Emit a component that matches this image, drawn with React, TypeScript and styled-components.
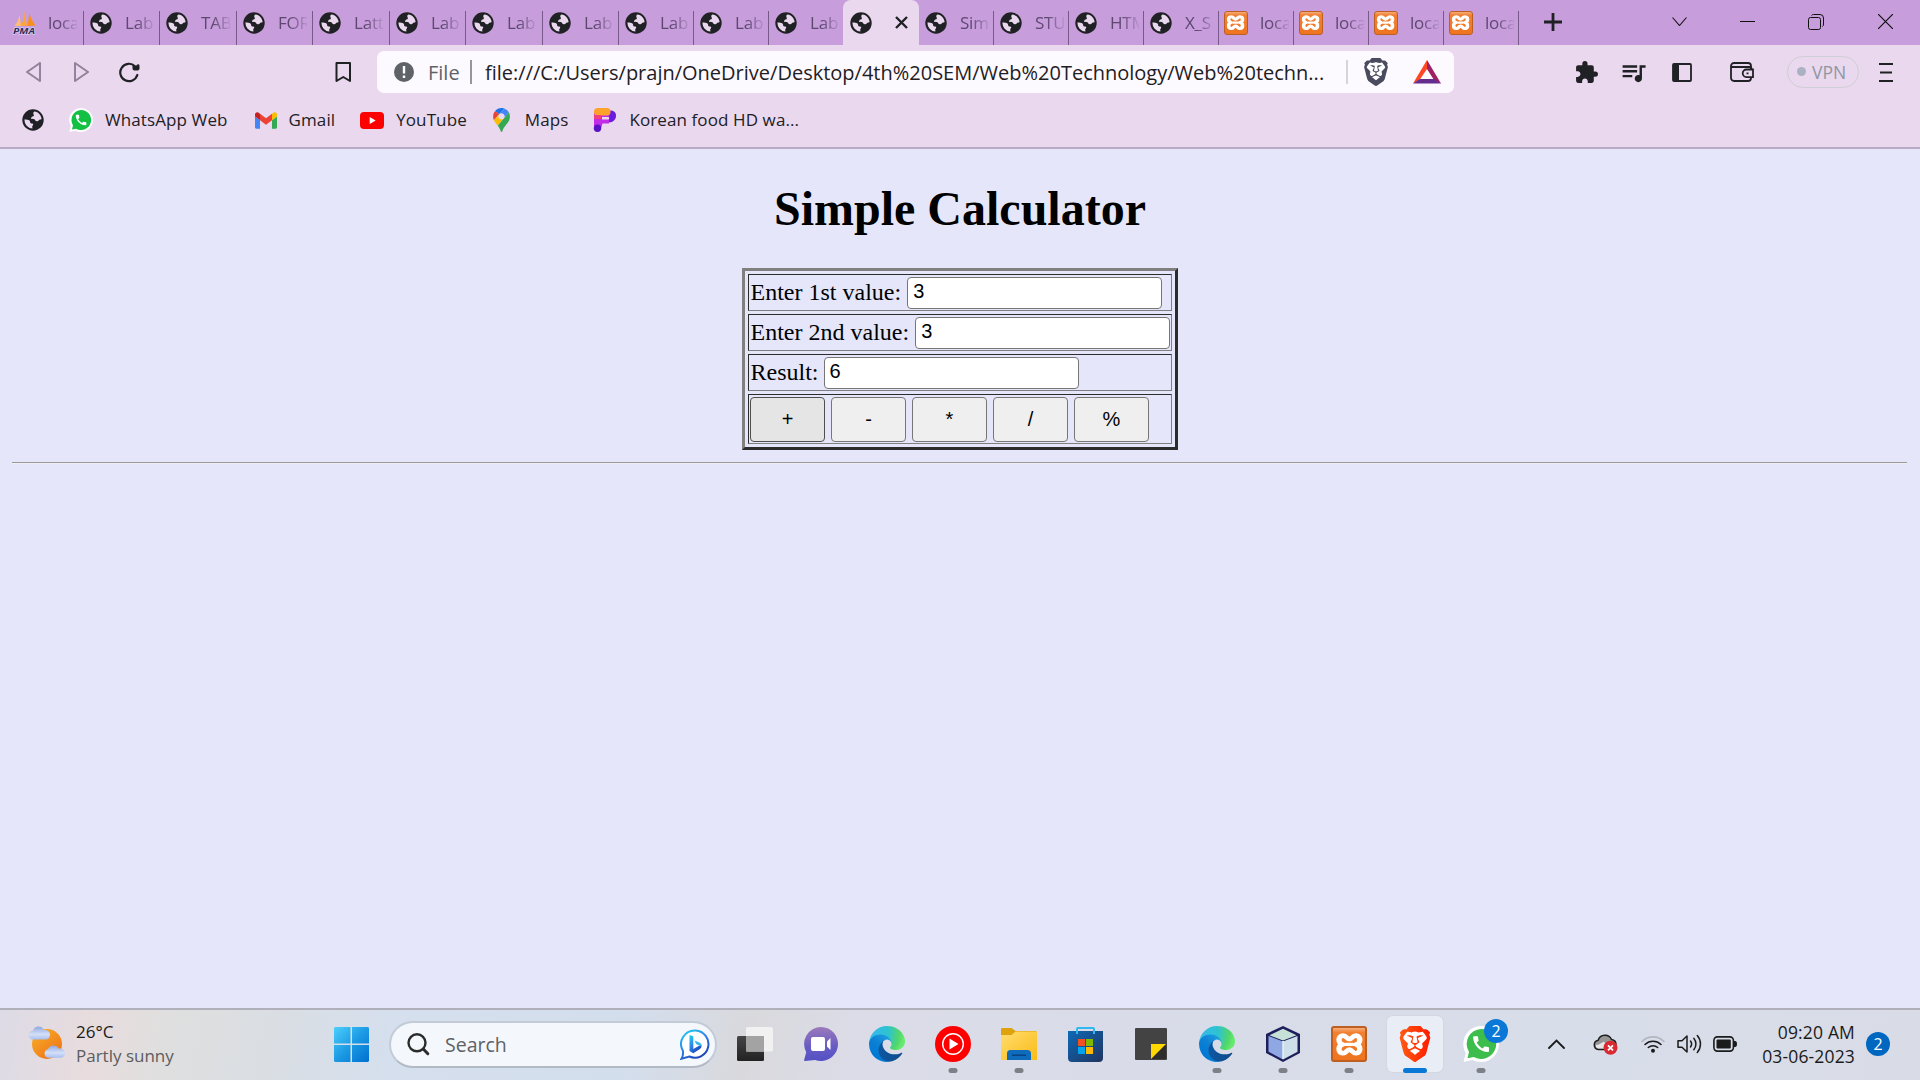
import React from "react";
import styled, { createGlobalStyle, css } from "styled-components";
import { SiBrave } from "react-icons/si";
import { MdExtension, MdQueueMusic } from "react-icons/md";

const UI_FONT = `"Open Sans", "Noto Sans", sans-serif`;

const GlobalStyle = createGlobalStyle`
  *, *::before, *::after { box-sizing: border-box; }
  html, body { margin: 0; padding: 0; }
  body { width: 1920px; height: 1080px; overflow: hidden; background: #e6e6fa; }
  svg { display: block; flex: none; }
`;

const Screen = styled.div`
  display: flex;
  flex-direction: column;
  width: 1920px;
  height: 1080px;
  font-family: ${UI_FONT};
  color: #202124;
`;

/* ---------- Browser chrome ---------- */

const TabStrip = styled.div`
  display: flex;
  height: 45px;
  background: #c79ddc;
`;

const Tab = styled.div<{ $width: number; $pad?: number; $active?: boolean; $divider?: boolean }>`
  display: flex;
  flex: none;
  align-items: flex-start;
  width: ${(p) => p.$width}px;
  padding-left: ${(p) => p.$pad ?? 5}px;
  padding-top: 11px;
  height: 45px;
  ${(p) =>
    p.$divider &&
    css`
      background: linear-gradient(#77598a, #77598a) right bottom / 1.5px 34px no-repeat;
    `}
  ${(p) =>
    p.$active &&
    css`
      background: #ead8ef;
      border-radius: 8px 8px 0 0;
    `}
`;

const TabTitle = styled.span`
  width: 29px;
  margin-left: 12px;
  overflow: hidden;
  white-space: nowrap;
  font-size: 17px;
  font-weight: 400;
  line-height: 23px;
  letter-spacing: -0.2px;
  color: #5d4870;
  mask-image: linear-gradient(90deg, #000 40%, transparent 108%);
`;

const CloseGlyph = styled.svg`
  margin: 5px 0 0 22px;
`;

const WindowControls = styled.div`
  display: flex;
  align-items: center;
  height: 43px;
`;

const Control = styled.div<{ $ml: number }>`
  display: flex;
  margin-left: ${(p) => p.$ml}px;
`;

const Toolbar = styled.div`
  display: flex;
  align-items: center;
  height: 54px;
  background: #ead8ef;
`;

const AddressBar = styled.div`
  display: flex;
  align-items: center;
  width: 1077px;
  height: 42px;
  margin-left: 25px;
  padding-left: 17px;
  background: #fdfaff;
  border-radius: 7px;
`;

const AddressText = styled.span<{ $width: number; $ml: number; $muted?: boolean }>`
  width: ${(p) => p.$width}px;
  margin-left: ${(p) => p.$ml}px;
  padding-top: 1px;
  font-size: 20px;
  line-height: 28px;
  white-space: nowrap;
  color: ${(p) => (p.$muted ? "#5f6368" : "#1f2023")};
`;

const Rule = styled.i<{ $ml: number; $light?: boolean }>`
  width: 2px;
  height: 24px;
  margin-left: ${(p) => p.$ml}px;
  background: ${(p) => (p.$light ? "#d3d5d9" : "#96959b")};
`;

const VpnPill = styled.div`
  display: flex;
  align-items: center;
  width: 72px;
  height: 32px;
  margin-left: 33px;
  padding: 0 0 1px 9px;
  border: 1px solid #cfcfd6;
  border-radius: 16px;
  font-size: 17.5px;
  color: #8f97a3;
`;

const VpnDot = styled.i`
  width: 9px;
  height: 9px;
  margin-right: 6px;
  border-radius: 50%;
  background: #acb0c3;
`;

const Bookmarks = styled.div`
  display: flex;
  align-items: center;
  height: 50px;
  padding: 0 0 6px 21px;
  background: #ead8ef;
  border-bottom: 2px solid #b9a9c4;
`;

const Bookmark = styled.div<{ $ml: number; $gap?: number; $ls?: number }>`
  display: flex;
  align-items: center;
  gap: ${(p) => p.$gap ?? 12}px;
  margin-left: ${(p) => p.$ml}px;
  height: 24px;
  font-size: 17px;
  line-height: 24px;
  letter-spacing: ${(p) => p.$ls ?? 0.1}px;
  white-space: nowrap;
`;

/* ---------- Page ---------- */

const Page = styled.main`
  flex: 1;
  padding: 0 13px 0 12px;
  background: #e6e6fa;
  color: #000;
  font-family: "Liberation Serif", "Times New Roman", serif;
  font-size: 24px;
`;

const Title = styled.h1`
  margin: 0 -1px 0 0;
  padding-top: 33px;
  font-size: 48px;
  line-height: 54px;
  text-align: center;
`;

const Calculator = styled.div`
  display: flex;
  flex-direction: column;
  gap: 3px;
  width: 436px;
  height: 182px;
  margin: 32px 0 0 730px;
  padding: 3px;
  border: 3px solid;
  border-color: #808080 #2c2c2c #2c2c2c #808080;
`;

const Cell = styled.div<{ $height: number; $gap?: number }>`
  display: flex;
  align-items: center;
  gap: ${(p) => p.$gap ?? 6}px;
  height: ${(p) => p.$height}px;
  padding-left: 1px;
  border: 1px solid;
  border-color: #2c2c2c #808080 #808080 #2c2c2c;
  white-space: nowrap;
`;

const FieldLabel = styled.label`
  padding-left: 0.5px;
  line-height: 27px;
`;

const Field = styled.input`
  width: 255px;
  height: 32px;
  padding: 0 5px 2px;
  border: 1px solid #767676;
  border-radius: 4px;
  outline: none;
  background: #fff;
  color: #000;
  font: 20px "Liberation Sans", Arial, sans-serif;
`;

const Operator = styled.button<{ $hover?: boolean }>`
  width: 75px;
  height: 45px;
  padding: 0;
  border: 1px solid ${(p) => (p.$hover ? "#4f4f4f" : "#767676")};
  border-radius: 4px;
  background: ${(p) => (p.$hover ? "#e5e5e5" : "#efefef")};
  color: #000;
  font: 20px "Liberation Sans", Arial, sans-serif;
`;

const PageRule = styled.hr`
  height: 2px;
  margin: 12px 0 0;
  border: 0;
  border-top: 1px solid #9a9a9a;
  border-bottom: 1px solid #eeeef4;
`;

/* ---------- Taskbar ---------- */

const Taskbar = styled.footer`
  display: flex;
  align-items: center;
  height: 72px;
  padding: 0 0 2px 28px;
  border-top: 2px solid #afb0ba;
  background: linear-gradient(
    100deg,
    #dddbe6 0,
    #e8dcdd 95px,
    #dfdfdf 170px,
    #dadee3 270px,
    #d5dfed 390px,
    #d3deed 620px,
    #d9d9dd 740px,
    #dbdce8 860px,
    #d8dce8 1200px,
    #d7dde9 1560px,
    #d9dce7 1920px
  );
`;

const Weather = styled.div`
  width: 130px;
  margin-left: 10px;
  font-size: 17px;
  line-height: 24px;
  white-space: nowrap;
  color: #1b1b1b;
`;

const Muted = styled.div`
  color: #5c5c5e;
`;

const StartButton = styled.div`
  margin-left: 128px;
`;

const SearchBox = styled.div`
  display: flex;
  align-items: center;
  width: 328px;
  height: 47px;
  margin-left: 20px;
  padding-left: 16px;
  border: 2px solid #c3cbd7;
  border-bottom-color: #b1bac5;
  border-radius: 24px;
  background: #f4f7fb;
  color: #5f6165;
  font-size: 19.5px;
`;

const SearchLabel = styled.span`
  width: 235px;
  margin-left: 15px;
`;

const Apps = styled.div`
  display: flex;
  margin-left: 5px;
`;

const AppSlot = styled.div<{ $active?: boolean }>`
  position: relative;
  display: flex;
  align-items: center;
  justify-content: center;
  width: ${(p) => (p.$active ? 56 : 66)}px;
  height: 56px;
  ${(p) =>
    p.$active &&
    css`
      margin: 0 5px;
      border-radius: 6px;
      background: #e9edf5;
      box-shadow: 0 0 0 1px #d3d7e2;
    `}
`;

const Indicator = styled.i<{ $active?: boolean }>`
  position: absolute;
  bottom: -1px;
  left: 50%;
  width: ${(p) => (p.$active ? 24 : 9)}px;
  height: 5px;
  border-radius: 3px;
  transform: translateX(-50%);
  background: ${(p) => (p.$active ? "#0a78d6" : "#7d8087")};
`;

const Count = styled.span<{ $floating?: boolean }>`
  display: flex;
  align-items: center;
  justify-content: center;
  width: 24px;
  height: 24px;
  border-radius: 50%;
  background: #0067c0;
  color: #fff;
  font-size: 16px;
  line-height: 24px;
  ${(p) =>
    p.$floating &&
    css`
      position: absolute;
      top: 3px;
      left: 36px;
      background: #0a78d6;
    `}
`;

const Tray = styled.div`
  display: flex;
  align-items: center;
  margin-left: 34px;
`;

const TrayItem = styled.div<{ $ml: number }>`
  margin-left: ${(p) => p.$ml}px;
`;

const Clock = styled.div`
  width: 95px;
  margin: 0 11px 0 23px;
  font-size: 17.5px;
  letter-spacing: 0.15px;
  line-height: 24px;
  text-align: right;
  white-space: nowrap;
  color: #1b1b1b;
`;

const XamppTile = styled.div<{ $size: number }>`
  display: flex;
  flex: none;
  align-items: center;
  justify-content: center;
  width: ${(p) => p.$size}px;
  height: ${(p) => p.$size}px;
  border: ${(p) => (p.$size > 30 ? 2 : 1)}px solid #bd5f20;
  border-radius: 3px;
  background: linear-gradient(#f6ae7c 0, #f28032 14%, #ee7420 100%);
`;

/* ---------- Icons ---------- */

const Globe = () => (
  <svg width="24" height="24" viewBox="0 0 24 24">
    <circle cx="12" cy="12" r="10.7" fill="#202124" />
    <path
      fill="#ead8ef"
      d="M3.4 11.6c1.9 0 4.1.1 5.1.9 1 .8.3 2.2 1.2 2.7.9.4 2.3 0 2.5 1 .2 1-1 1.4-1 2.4 0 .8.3 1.2.2 1.9A8.7 8.7 0 0 1 3.4 11.6zM13.6 3.5c3.6.6 6.6 3.5 7 7.6-1 .7-2.2.5-2.7 1.2-.7.9-1.6 1.1-2.8.7-1.4-.5-1-1.8-2.3-2-1.1-.2-2.5.2-2.600-1 0-1.500 2.500-1.200 2.700-2.400.1-.9-.8-1.400-.6-2.500.1-.7.6-1.400 1.300-1.600z"
    />
  </svg>
);

const PmaIcon = () => (
  <svg width="24" height="24" viewBox="0 0 24 24">
    <path fill="#ffbd70" d="M7.500 3.500 9 15H2.500C5 12 7 8 7.500 3.500z" />
    <path fill="#ffa33d" d="M12.500 0 15 15H8.500C11 11 12.500 6 12.500 0z" />
    <path fill="#f98f1d" d="M17.500 2c1 5 3.500 9 6 12.500L15.500 15z" />
    <text x="12" y="23" textAnchor="middle" textLength="22" lengthAdjust="spacingAndGlyphs" fontSize="9" fontWeight="700" fontStyle="italic" fontFamily={UI_FONT} fill="#2d2d5e" stroke="#e6d9f2" strokeWidth="1.200" paintOrder="stroke">PMA</text>
  </svg>
);

const Xampp = ({ size = 24 }: { size?: number }) => (
  <XamppTile $size={size}>
    <svg width={size * 0.8} height={size * 0.8} viewBox="0 0 24 24" fill="none" stroke="#fff" strokeWidth="4.400" strokeLinecap="round" strokeLinejoin="round">
      <path d="M6.400 12C2.500 11 2 4 6.500 3.600 9.500 3.300 9.500 7 12 7s2.500-3.700 5.500-3.400C22 4 21.500 11 17.600 12c3.900 1 4.400 8-.1 8.400-3 .3-3-3.400-5.500-3.400s-2.500 3.700-5.500 3.400C2 20 2.500 13 6.400 12z" transform="translate(0 1.500) scale(1 .875)" />
      <path strokeWidth="2.800" d="M9 12h6" />
    </svg>
  </XamppTile>
);

const PHONE =
  "M20.010 15.380c-1.230 0-2.420-.2-3.530-.56-.35-.12-.74-.03-1.010.24l-1.570 1.970c-2.830-1.350-5.480-3.900-6.890-6.830l1.950-1.660c.27-.28.35-.67.24-1.020-.37-1.110-.56-2.300-.56-3.530 0-.54-.45-.99-.99-.99H4.190C3.650 3 3 3.240 3 3.990 3 13.280 10.730 21 20.010 21c.71 0 .99-.63.99-1.180v-3.450c0-.54-.45-.99-.99-.99z";

const WhatsApp = ({ size, green }: { size: number; green: string }) => (
  <svg width={size} height={size} viewBox="0 0 36 36">
    <path fill="#fff" d="M18 0a18 18 0 1 1-8.300 34L.5 36l2.200-9A18 18 0 0 1 18 0z" />
    <path fill={green} d="M18 3a15 15 0 1 1-7.300 28L4.500 32.200 6 26A15 15 0 0 1 18 3z" />
    <g fill="#fff" transform="translate(7.500 7.500) scale(.88)">
      <path d={PHONE} />
    </g>
  </svg>
);

const Gmail = () => (
  <svg width="22" height="17" viewBox="52 42 88 66">
    <path fill="#4285f4" d="M58 108h14V74L52 59v43c0 3.320 2.690 6 6 6" />
    <path fill="#34a853" d="M120 108h14c3.320 0 6-2.690 6-6V59l-20 15" />
    <path fill="#fbbc04" d="M120 48v26l20-15v-8c0-7.420-8.470-11.650-14.400-7.200" />
    <path fill="#ea4335" d="M72 74V48l24 18 24-18v26L96 92" />
    <path fill="#c5221f" d="M52 51v8l20 15V48l-5.600-4.200c-5.940-4.450-14.400-.22-14.400 7.200" />
  </svg>
);

const YouTube = () => (
  <svg width="24" height="17" viewBox="0 0 24 17">
    <rect width="24" height="17" rx="4" fill="#f00" />
    <path fill="#fff" d="M9.700 5v7l6-3.500z" />
  </svg>
);

const MapsPin = () => (
  <svg width="17" height="24" viewBox="0 0 92.300 132.300">
    <path fill="#1a73e8" d="M60.200 2.200C55.800.8 51 0 46.100 0 32 0 19.300 6.400 10.800 16.500l21.800 18.300L60.200 2.200z" />
    <path fill="#ea4335" d="M10.800 16.500C4.100 24.500 0 34.900 0 46.100c0 8.700 1.700 15.700 4.600 22l28-33.300-21.800-18.300z" />
    <path fill="#4285f4" d="M46.200 28.500c9.800 0 17.700 7.900 17.700 17.700 0 4.300-1.600 8.300-4.200 11.400 0 0 13.900-16.600 27.500-32.700-5.600-10.800-15.300-19-27-22.700L32.600 34.800c3.300-3.800 8.100-6.300 13.600-6.300" />
    <path fill="#fbbc04" d="M46.200 63.800c-9.800 0-17.700-7.900-17.700-17.700 0-4.300 1.500-8.300 4.100-11.300l-28 33.300c4.800 10.600 12.800 19.200 21 29.900l34.100-40.500c-3.300 3.900-8.100 6.300-13.500 6.300" />
    <path fill="#34a853" d="M59.100 109.200c15.400-24.100 33.300-35 33.300-63 0-7.700-1.900-14.900-5.200-21.300L25.600 98c2.600 3.400 5.300 7.300 7.900 11.300 9.400 14.500 6.800 23.100 12.800 23.100s3.400-8.700 12.800-23.200" />
  </svg>
);

const PicsArt = () => (
  <svg width="24" height="24" viewBox="0 0 24 24">
    <path fill="#6a1be0" d="M16 2.500c5.500 0 7 2 7 5.500s-3 6.500-7 6.500z" />
    <path fill="#c22be8" d="M1 5h15v10.500H9.500L8 20.500H1z" />
    <rect x="1" width="16.500" height="7.500" rx="3.500" fill="#ffa22b" />
    <path fill="#f43f7e" d="M1 7h7v4H1z" />
    <path fill="#ead8ef" d="M9 9h6a1.300 1.300 0 0 1 0 2.600H9z" />
    <circle cx="4.500" cy="20.200" r="3.700" fill="#5a10c4" />
  </svg>
);

const BraveLion = ({ size, fill }: { size: number; fill: string }) => (
  <svg width={size} height={size} viewBox="0 0 24 24">
    <defs>
      <linearGradient id="braveFill" x1="0" x2="1">
        <stop offset="0" stopColor="#ff5a12" />
        <stop offset="1" stopColor="#ff1c00" />
      </linearGradient>
    </defs>
    <path fill="#fff" d="M6 4h12l2 4-2 9-6 5-6-5-2-9z" />
    <SiBrave size={24} style={{ fill }} />
  </svg>
);

const BatTriangle = () => (
  <svg width="28" height="24" viewBox="0 0 28 24">
    <path fill="#ff4724" d="M14 0v9L6.500 20 0 23.500z" />
    <path fill="#9e1f63" d="M14 0v9l7 11 7 3.500z" />
    <path fill="#662d91" d="M0 23.500 7 19h14l7 4.500z" />
  </svg>
);

const EdgeLogo = () => (
  <svg width="36" height="36" viewBox="0 0 256 256">
    <defs>
      <linearGradient id="edgeNavy" x1="63" y1="177" x2="241" y2="177" gradientUnits="userSpaceOnUse">
        <stop offset="0" stopColor="#0c59a4" />
        <stop offset="1" stopColor="#114a8b" />
      </linearGradient>
      <linearGradient id="edgeBlue" x1="157" y1="100" x2="46" y2="221" gradientUnits="userSpaceOnUse">
        <stop offset="0" stopColor="#1b9de2" />
        <stop offset=".5" stopColor="#0d80d3" />
        <stop offset="1" stopColor="#0078d4" />
      </linearGradient>
      <radialGradient id="edgeTeal" cx="26" cy="50" r="230" gradientUnits="userSpaceOnUse">
        <stop offset="0" stopColor="#35b8ea" />
        <stop offset=".5" stopColor="#2dc3cf" />
        <stop offset=".85" stopColor="#52d76a" />
        <stop offset="1" stopColor="#66eb6e" />
      </radialGradient>
    </defs>
    <g transform="translate(-4.630 -4.920)">
      <path fill="url(#edgeNavy)" d="M235.680 195.460a93.730 93.730 0 0 1-10.540 4.710 101.870 101.870 0 0 1-35.900 6.460c-47.320 0-88.540-32.550-88.540-74.320A31.480 31.480 0 0 1 117.130 105c-42.800 1.800-53.800 46.400-53.800 72.530 0 73.880 68.090 81.370 82.760 81.370 7.910 0 19.840-2.300 27-4.560l1.310-.44a128.340 128.340 0 0 0 66.600-52.800 4 4 0 0 0-5.320-5.640z" />
      <path fill="url(#edgeBlue)" d="M110.340 246.340A79.200 79.200 0 0 1 87.600 225a80.720 80.720 0 0 1 29.530-120c3.120-1.470 8.450-4.130 15.540-4a32.350 32.350 0 0 1 25.690 13 31.880 31.880 0 0 1 6.360 18.660c0-.21 24.460-79.600-80-79.600-43.900 0-80 41.660-80 78.210a130.150 130.150 0 0 0 12.110 56 128 128 0 0 0 156.380 67.110 75.550 75.550 0 0 1-62.780-8z" />
      <path fill="url(#edgeTeal)" d="M156.940 153.780c-.81 1.050-3.300 2.500-3.300 5.660 0 2.610 1.700 5.120 4.720 7.230 14.380 10 41.490 8.680 41.560 8.680a59.560 59.560 0 0 0 30.270-8.350 61.380 61.380 0 0 0 30.430-52.880c.26-22.410-8-37.310-11.340-43.910C228.090 28.760 182.350 4.920 132.610 4.920a128 128 0 0 0-128 126.200c.48-36.540 36.800-66.050 80-66.050 3.500 0 23.460.34 42 10.070 16.340 8.580 24.900 18.940 30.850 29.210 6.180 10.670 7.280 24.150 7.280 29.520s-2.740 13.330-7.800 19.910z" />
    </g>
  </svg>
);

const SunCloud = () => (
  <svg width="38" height="36" viewBox="0 0 38 36">
    <defs>
      <linearGradient id="sun" x1="0" y1="0" x2=".8" y2="1">
        <stop offset="0" stopColor="#f7b42b" />
        <stop offset="1" stopColor="#f07013" />
      </linearGradient>
      <linearGradient id="cloud" x1="0" y1="0" x2="0" y2="1">
        <stop offset="0" stopColor="#8fa6e0" />
        <stop offset=".6" stopColor="#d4e0f8" />
        <stop offset="1" stopColor="#a9bff0" />
      </linearGradient>
    </defs>
    <circle cx="19" cy="18" r="15" fill="url(#sun)" />
    <path fill="url(#cloud)" d="M5 13.500a4.400 4.400 0 0 1 0-8.800C6-.5 14-1 16 4c3-.5 6 1.500 6 4.800 0 3-2 4.700-4.500 4.700z" />
    <path fill="url(#cloud)" d="M20 31.800a4.400 4.400 0 0 1 0-8.600c1-4.700 9-5.200 10.500-.7 3.500-.5 6.500 1.500 6.500 4.800 0 3-2 4.500-4.500 4.500z" />
  </svg>
);

const WindowsLogo = () => (
  <svg width="35" height="35" viewBox="0 0 35 35">
    <defs>
      <linearGradient id="win" x1="0" y1="0" x2="35" y2="35" gradientUnits="userSpaceOnUse">
        <stop offset="0" stopColor="#4cd0fc" />
        <stop offset=".5" stopColor="#1c9ae4" />
        <stop offset="1" stopColor="#0070d0" />
      </linearGradient>
    </defs>
    <path fill="url(#win)" d="M1 0h15.500v16.500H0V1zM18 0h16l1 1v15.500H18zM0 18h16.500v17H1l-1-1zM18 18h17v16l-1 1H18z" />
  </svg>
);

const SearchGlyph = () => (
  <svg width="23" height="23" viewBox="0 0 23 23" fill="none" stroke="#2b2b2b" strokeLinecap="round">
    <circle cx="10" cy="9.800" r="8.500" strokeWidth="2.400" />
    <path strokeWidth="3" d="m16.300 16 4.500 4.700" />
  </svg>
);

const BingChat = () => (
  <svg width="30" height="31" viewBox="0 0 30 31">
    <defs>
      <linearGradient id="bing" x1="0" y1="0" x2=".6" y2="1">
        <stop offset="0" stopColor="#1fd3f0" />
        <stop offset=".5" stopColor="#2f86ea" />
        <stop offset="1" stopColor="#1b44b8" />
      </linearGradient>
    </defs>
    <path fill="#fff" stroke="url(#bing)" strokeWidth="2" d="M15.500 1.500a13.600 13.600 0 1 1-6.200 26L1.500 29.700c1.400-2 1.800-4 1.500-7.700A13.600 13.600 0 0 1 15.500 1.500z" />
    <path fill="url(#bing)" d="m9.500 6 3.800 1.300V20l7.900-4.600c1 2-.2 4-2 5.100l-6 3.800L9.500 22z" />
    <path fill="#31b9f2" d="m14.500 11.500 5 2c1.500.8 2.200 2.100 1.700 3.500l-4.900-1.800z" />
  </svg>
);

const TaskView = () => (
  <svg width="36" height="34" viewBox="0 0 36 34">
    <defs>
      <linearGradient id="tvDark" x1="0" y1="0" x2="0" y2="1">
        <stop offset="0" stopColor="#454545" />
        <stop offset="1" stopColor="#222" />
      </linearGradient>
    </defs>
    <rect y="9" width="27" height="25" rx="1.500" fill="url(#tvDark)" />
    <rect x="9" width="27" height="24.500" rx="1.500" fill="#f1f1f1" />
    <path fill="#a3a3a3" d="M9 9h18v15.500H9z" />
  </svg>
);

const ChatIcon = () => (
  <svg width="34" height="34" viewBox="0 0 34 34">
    <defs>
      <linearGradient id="chat" x1="0" y1="0" x2="0" y2="1">
        <stop offset="0" stopColor="#9c79bb" />
        <stop offset=".6" stopColor="#665bc4" />
        <stop offset="1" stopColor="#5451c4" />
      </linearGradient>
    </defs>
    <path fill="url(#chat)" d="M17 0a17 17 0 1 1-6 32.900L1 34c-.8 0-1.200-.6-.8-1.300l2-7.500A17 17 0 0 1 17 0z" />
    <rect x="7" y="10" width="14" height="14" rx="2" fill="#fff" />
    <path fill="#fff" d="M23 14.500 26.500 11v12L23 19.500z" />
  </svg>
);

const YtMusic = () => (
  <svg width="36" height="36" viewBox="0 0 36 36">
    <circle cx="18" cy="18" r="18" fill="#f00" />
    <circle cx="18" cy="18" r="10.300" fill="none" stroke="#fff" strokeWidth="1.400" />
    <path fill="#fff" d="M14.500 12.500v11l9-5.500z" />
  </svg>
);

const Folder = () => (
  <svg width="36" height="33" viewBox="0 0 36 33">
    <defs>
      <linearGradient id="folder" x1="0" y1="0" x2="1" y2="1">
        <stop offset="0" stopColor="#ffdc70" />
        <stop offset="1" stopColor="#fbbc16" />
      </linearGradient>
    </defs>
    <path fill="#dfa10c" d="M0 1.500C0 .5.500 0 1.500 0h9l4 3H35l1 1v5H0z" />
    <path fill="url(#folder)" d="M0 7h10.500l4-3.500H36V32H0z" />
    <path fill="#0f6cbd" d="M6 32v-6.500A3.500 3.500 0 0 1 9.500 22h17a3.500 3.500 0 0 1 3.500 3.500V32z" />
    <path stroke="#08437e" strokeWidth="1.500" d="M11 27.200h14" />
  </svg>
);

const Store = () => (
  <svg width="35" height="35" viewBox="0 0 35 35">
    <defs>
      <linearGradient id="store" x1="0" y1="0" x2="1" y2="1">
        <stop offset="0" stopColor="#0e69b6" />
        <stop offset="1" stopColor="#20345f" />
      </linearGradient>
    </defs>
    <path fill="url(#store)" d="M0 4h35v27a4 4 0 0 1-4 4H4a4 4 0 0 1-4-4z" />
    <path fill="none" stroke="#2fb9f1" strokeWidth="2" d="M9 7V2q0-1 1-1h15q1 0 1 1v5" />
    <path fill="#f25022" d="M10 12h7v7h-7z" />
    <path fill="#7fba00" d="M18 12h7v7h-7z" />
    <path fill="#00a4ef" d="M10 20h7v7h-7z" />
    <path fill="#ffb900" d="M18 20h7v7h-7z" />
  </svg>
);

const StickyNotes = () => (
  <svg width="32" height="32" viewBox="0 0 32 32">
    <rect width="32" height="32" rx="1" fill="#434343" />
    <path fill="#2d2d2d" d="M31 16v15H16z" />
    <path fill="#ffd800" d="M16 16h15L16 31z" />
  </svg>
);

const NetBeans = () => (
  <svg width="34" height="36" viewBox="0 0 34 36">
    <path fill="#1e1e5a" d="M17 0 34 8v19L17 36 0 27V8z" />
    <path fill="#c6e1d8" d="m17 2.800 13.500 6.400L17 14.500 3.500 9.200z" />
    <path fill="#8fa7e3" d="M2.500 10 17 15.500V33.500L2.500 25.700z" />
    <path fill="#cfdfea" d="M31.500 10 17 15.500V33.500l14.500-7.800z" />
    <path stroke="#e5f0f7" strokeWidth="1.500" d="M17 15v18" />
  </svg>
);

const CloudError = () => (
  <svg width="25" height="22" viewBox="0 0 25 22">
    <path fill="#969696" stroke="#1c1c1c" strokeWidth="1.500" d="M5.500 16.500a4.700 4.700 0 0 1-.3-9.300C7 1 16 .5 18.500 6.500c3 .5 4.500 2.500 4.500 5s-2 5-4.500 5z" />
    <path fill="#e6e6e6" d="M5.500 15.500c-2-.5-3-2-2.500-3.500 3 0 5-2 8-3.500l4 7z" />
    <circle cx="17.500" cy="14.800" r="7" fill="#da2a31" />
    <path stroke="#fff" strokeWidth="1.800" d="m15 12.300 5 5m0-5-5 5" />
  </svg>
);

const Wifi = () => (
  <svg width="24" height="18" viewBox="0 0 24 18" fill="none" strokeLinecap="round" strokeWidth="1.600">
    <path stroke="#b2b6bf" d="M1 6.500a15.500 15.500 0 0 1 22 0" />
    <path stroke="#1b1b1b" d="M4 9.500a11.500 11.500 0 0 1 16 0M7.300 12.500a7 7 0 0 1 9.400 0" />
    <circle cx="12" cy="15.800" r="2" fill="#1b1b1b" />
  </svg>
);

const Volume = () => (
  <svg width="25" height="20" viewBox="0 0 25 20" fill="none" stroke="#1b1b1b" strokeWidth="1.500" strokeLinecap="round" strokeLinejoin="round">
    <path d="M1 6.800h4l5-4.800v16l-5-4.800H1zM13.500 7a5 5 0 0 1 0 6M16.800 4.200a9 9 0 0 1 0 11.600M20.300 1.500a13 13 0 0 1 0 17" />
  </svg>
);

const Battery = () => (
  <svg width="24" height="16" viewBox="0 0 24 16">
    <rect x=".9" y=".9" width="19.500" height="14.200" rx="3.500" fill="none" stroke="#1b1b1b" strokeWidth="1.600" />
    <rect x="3.500" y="3.500" width="14.300" height="9" rx="1" fill="#1b1b1b" />
    <path fill="#1b1b1b" d="M21 5h1q2 0 2 3t-2 3h-1z" />
  </svg>
);

/* ---------- Data ---------- */

type TabInfo = { width: number; title?: string; icon: "pma" | "globe" | "xampp"; active?: boolean; pad?: number };

const tabs: TabInfo[] = [
  { width: 84, title: "loca", icon: "pma", pad: 12 },
  { width: 76, title: "Lab", icon: "globe" },
  { width: 77, title: "TAB", icon: "globe" },
  { width: 76, title: "FOR", icon: "globe" },
  { width: 77, title: "Latt", icon: "globe" },
  { width: 76, title: "Lab", icon: "globe" },
  { width: 77, title: "Lab", icon: "globe" },
  { width: 76, title: "Lab", icon: "globe" },
  { width: 75, title: "Lab", icon: "globe" },
  { width: 75, title: "Lab", icon: "globe" },
  { width: 74, title: "Lab", icon: "globe" },
  { width: 76, icon: "globe", active: true, pad: 6 },
  { width: 75, title: "Sim", icon: "globe" },
  { width: 75, title: "STU", icon: "globe" },
  { width: 75, title: "HTM", icon: "globe" },
  { width: 75, title: "X_S", icon: "globe" },
  { width: 75, title: "loca", icon: "xampp" },
  { width: 75, title: "loca", icon: "xampp" },
  { width: 75, title: "loca", icon: "xampp" },
  { width: 75, title: "loca", icon: "xampp" },
];

const tabIcons = { pma: <PmaIcon />, globe: <Globe />, xampp: <Xampp /> };

const fields = [
  { label: "Enter 1st value:", value: "3", gap: 6 },
  { label: "Enter 2nd value:", value: "3", gap: 6 },
  { label: "Result:", value: "6", gap: 5 },
];

const operators = ["+", "-", "*", "/", "%"];

const apps: { icon: React.ReactNode; running?: boolean; active?: boolean; count?: number }[] = [
  { icon: <TaskView /> },
  { icon: <ChatIcon /> },
  { icon: <EdgeLogo /> },
  { icon: <YtMusic />, running: true },
  { icon: <Folder />, running: true },
  { icon: <Store /> },
  { icon: <StickyNotes /> },
  { icon: <EdgeLogo />, running: true },
  { icon: <NetBeans />, running: true },
  { icon: <Xampp size={36} />, running: true },
  { icon: <BraveLion size={36} fill="url(#braveFill)" />, running: true, active: true },
  { icon: <WhatsApp size={36} green="#3dbd4c" />, running: true, count: 2 },
];

export default function App() {
  return (
    <Screen>
      <GlobalStyle />
      <TabStrip>
        {tabs.map((tab, i) => (
          <Tab key={i} $width={tab.width} $pad={tab.pad} $active={tab.active} $divider={!tab.active && !tabs[i + 1]?.active}>
            {tabIcons[tab.icon]}
            {tab.active ? (
              <CloseGlyph width="13" height="13" viewBox="0 0 13 13" stroke="#202124" strokeWidth="2.400">
                <path d="m1 1 11 11M12 1 1 12" />
              </CloseGlyph>
            ) : (
              <TabTitle>{tab.title}</TabTitle>
            )}
          </Tab>
        ))}
        <WindowControls>
          <Control $ml={25}>
            <svg width="18" height="18" viewBox="0 0 18 18" stroke="#202124" strokeWidth="2.800"><path d="M9 0v18M0 9h18" /></svg>
          </Control>
          <Control $ml={110}>
            <svg width="15" height="9" viewBox="0 0 15 9" fill="none" stroke="#111" strokeWidth="1.100"><path d="m.5.5 7 8 7-8" /></svg>
          </Control>
          <Control $ml={53}>
            <svg width="15" height="1" viewBox="0 0 15 1"><path fill="#111" d="M0 0h15v1H0z" /></svg>
          </Control>
          <Control $ml={53}>
            <svg width="16" height="16" viewBox="0 0 16 16" fill="none" stroke="#111">
              <rect x=".5" y="3.500" width="12" height="12" rx="2" />
              <path d="M3.500 1.500q.5-1 2-1H12q3.500 0 3.500 3.500v6q0 2-1 2.500" />
            </svg>
          </Control>
          <Control $ml={54}>
            <svg width="15" height="15" viewBox="0 0 15 15" stroke="#111" strokeWidth="1.200"><path d="m0 0 15 15M15 0 0 15" /></svg>
          </Control>
        </WindowControls>
      </TabStrip>

      <Toolbar>
        <Control $ml={26}>
          <svg width="16" height="20" viewBox="0 0 16 20" fill="none" stroke="#93829b" strokeWidth="2" strokeLinejoin="round"><path d="M14 1v18L1 10z" /></svg>
        </Control>
        <Control $ml={32}>
          <svg width="16" height="20" viewBox="0 0 16 20" fill="none" stroke="#93829b" strokeWidth="2" strokeLinejoin="round"><path d="M1 1v18l13-9z" /></svg>
        </Control>
        <Control $ml={29}>
          <svg width="22" height="21" viewBox="0 0 22 21">
            <path fill="none" stroke="#202124" strokeWidth="2.200" strokeLinecap="round" d="M16 4.200A8.700 8.700 0 1 0 18.300 13" />
            <path fill="#202124" d="M13.500 3.200 17 4q.8-2 2.500-1.700Q20.500 2.500 20.500 4v2.500q0 2-2 2h-3q-2 0-2-2z" />
          </svg>
        </Control>
        <Control $ml={194}>
          <svg width="17" height="20" viewBox="0 0 17 20" fill="none" stroke="#202124" strokeWidth="2" strokeLinejoin="round"><path d="M1.500 1h13.500v18l-6.750-4L1.500 19z" /></svg>
        </Control>
        <AddressBar>
          <svg width="20" height="20" viewBox="0 0 20 20">
            <circle cx="10" cy="10" r="10" fill="#5f6368" />
            <path fill="#fff" d="M8.800 4h2.400v7.500H8.800zM8.800 13.500h2.400v2.400H8.800z" />
          </svg>
          <AddressText $ml={14} $width={42} $muted>File</AddressText>
          <Rule $ml={0} />
          <AddressText $ml={13} $width={861}>file:///C:/Users/prajn/OneDrive/Desktop/4th%20SEM/Web%20Technology/Web%20techn...</AddressText>
          <Rule $ml={0} $light />
          <Control $ml={14}><BraveLion size={28} fill="#4a4b5e" /></Control>
          <Control $ml={23}><BatTriangle /></Control>
        </AddressBar>
        <Control $ml={120}><MdExtension size={25} color="#202124" /></Control>
        <Control $ml={20}><MdQueueMusic size={29} color="#202124" /></Control>
        <Control $ml={24}>
          <svg width="20" height="19" viewBox="0 0 20 19">
            <rect x="1" y="1" width="18" height="17" rx="1" fill="none" stroke="#202124" strokeWidth="1.800" />
            <path fill="#202124" d="M1 1h6v17H1z" />
          </svg>
        </Control>
        <Control $ml={38}>
          <svg width="24" height="20" viewBox="0 0 24 20" fill="none" stroke="#202124" strokeWidth="1.800">
            <rect x="1" y="1" width="20" height="18" rx="3" />
            <path d="M1 5h18.500q2 0 2 2" />
            <path fill="#ead8ef" d="M23 7.500h-6.500a3.800 3.800 0 0 0 0 7.600H23zM16.500 11.300h2" />
          </svg>
        </Control>
        <VpnPill><VpnDot />VPN</VpnPill>
        <Control $ml={20}>
          <svg width="14" height="19" viewBox="0 0 14 19"><path fill="#202124" d="M0 0h14v2H0zM1 8.500h12v2H1zM0 17h14v2H0z" /></svg>
        </Control>
      </Toolbar>

      <Bookmarks>
        <Globe />
        <Bookmark $ml={24}><WhatsApp size={24} green="#12c143" />WhatsApp Web</Bookmark>
        <Bookmark $ml={27}><Gmail />Gmail</Bookmark>
        <Bookmark $ml={25}><YouTube />YouTube</Bookmark>
        <Bookmark $ml={26} $gap={15}><MapsPin />Maps</Bookmark>
        <Bookmark $ml={25}><PicsArt />Korean food HD wa...</Bookmark>
      </Bookmarks>

      <Page>
        <Title>Simple Calculator</Title>
        <Calculator>
          {fields.map((f) => (
            <Cell key={f.label} $height={37} $gap={f.gap}>
              <FieldLabel>{f.label}</FieldLabel>
              <Field defaultValue={f.value} />
            </Cell>
          ))}
          <Cell $height={50}>
            {operators.map((op, i) => (
              <Operator key={op} $hover={i === 0}>{op}</Operator>
            ))}
          </Cell>
        </Calculator>
        <PageRule />
      </Page>

      <Taskbar>
        <SunCloud />
        <Weather>
          <div>26°C</div>
          <Muted>Partly sunny</Muted>
        </Weather>
        <StartButton><WindowsLogo /></StartButton>
        <SearchBox>
          <SearchGlyph />
          <SearchLabel>Search</SearchLabel>
          <BingChat />
        </SearchBox>
        <Apps>
          {apps.map((app, i) => (
            <AppSlot key={i} $active={app.active}>
              {app.icon}
              {app.running && <Indicator $active={app.active} />}
              {app.count && <Count $floating>{app.count}</Count>}
            </AppSlot>
          ))}
        </Apps>
        <Tray>
          <svg width="17" height="10" viewBox="0 0 17 10" fill="none" stroke="#1b1b1b" strokeWidth="1.800" strokeLinecap="round"><path d="m1 9 7.500-7.500L16 9" /></svg>
          <TrayItem $ml={28}><CloudError /></TrayItem>
          <TrayItem $ml={23}><Wifi /></TrayItem>
          <TrayItem $ml={12}><Volume /></TrayItem>
          <TrayItem $ml={11}><Battery /></TrayItem>
          <Clock>
            <div>09:20 AM</div>
            <div>03-06-2023</div>
          </Clock>
          <Count>2</Count>
        </Tray>
      </Taskbar>
    </Screen>
  );
}
